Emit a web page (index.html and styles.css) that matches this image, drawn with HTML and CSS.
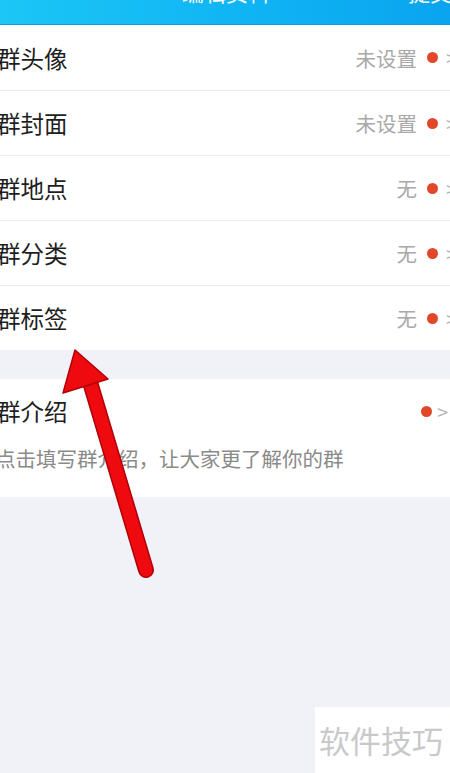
FILE: index.html
```html
<!DOCTYPE html>
<html lang="zh">
<head>
<meta charset="utf-8">
<link rel="stylesheet" href="styles.css">
</head>
<body>
<div class="page">
  <header class="topbar">
    <span class="back">&lsaquo;</span>
    <span class="title">编辑资料</span>
    <span class="submit">提交</span>
  </header>

  <section class="list">
    <div class="row"><span class="label">群头像</span><span class="value">未设置</span><span class="dot"></span><span class="chev">&gt;</span></div>
    <div class="row"><span class="label">群封面</span><span class="value">未设置</span><span class="dot"></span><span class="chev">&gt;</span></div>
    <div class="row"><span class="label">群地点</span><span class="value">无</span><span class="dot"></span><span class="chev">&gt;</span></div>
    <div class="row"><span class="label">群分类</span><span class="value">无</span><span class="dot"></span><span class="chev">&gt;</span></div>
    <div class="row"><span class="label">群标签</span><span class="value">无</span><span class="dot"></span><span class="chev">&gt;</span></div>
  </section>

  <section class="intro">
    <div class="intro-head"><span class="label">群介绍</span><span class="dot"></span><span class="chev">&gt;</span></div>
    <div class="intro-desc">点击填写群介绍，让大家更了解你的群</div>
  </section>

  <svg class="arrow" width="450" height="773" viewBox="0 0 450 773">
    <line x1="146" y1="570" x2="90" y2="382" stroke="#b00008" stroke-width="16" stroke-linecap="round"/>
    <line x1="146" y1="570" x2="90" y2="382" stroke="#ee0a0e" stroke-width="13" stroke-linecap="round"/>
    <polygon points="75,350 108,379 63,393" fill="#ee0a0e" stroke="#b00008" stroke-width="1.5" stroke-linejoin="round"/>
  </svg>

  <div class="watermark">软件技巧</div>
</div>
</body>
</html>
```

FILE: styles.css
```css
* { box-sizing: border-box; margin: 0; padding: 0; }
html, body { width: 450px; height: 773px; overflow: hidden; }
body {
  background: #f1f2f7;
  font-family: "Noto Sans CJK SC", "Noto Sans", sans-serif;
}
.page { position: relative; width: 450px; height: 773px; }

.topbar {
  height: 25px;
  background: linear-gradient(90deg, #1cc6f6 0%, #10b6f4 50%, #0aa4f0 100%);
  border-bottom: 1px solid #0e9fd6;
  position: relative;
  overflow: hidden;
  color: #fff;
}
.topbar span {
  position: absolute;
  line-height: 22px;
  font-size: 22px;
  top: -20px;
  white-space: nowrap;
}
.back { left: 2px; font-size: 30px; }
.title { left: 182px; }
.submit { left: 408px; }

.list { background: #fff; }
.row {
  height: 65px;
  display: flex;
  align-items: center;
  border-top: 1px solid #ececec;
}
.row:first-child { border-top: none; }
.label {
  flex: 1;
  font-size: 23.5px;
  color: #1e1e1e;
  margin-left: -3px;
}
.value {
  font-size: 20.5px;
  color: #a9a9a9;
  margin-right: 10px;
}
.dot {
  width: 11px;
  height: 11px;
  border-radius: 50%;
  background: #e2472a;
  flex: none;
}
.chev {
  font-size: 20px;
  color: #b5b5b5;
  margin-left: 8px;
  width: 4px;
  overflow: hidden;
  flex: none;
}

.intro {
  margin-top: 29px;
  background: #fff;
  height: 118px;
  padding-top: 15px;
}
.intro-head {
  display: flex;
  align-items: center;
  height: 34px;
}
.intro-head .chev { width: 13px; margin-left: 5px; }
.intro-desc {
  margin-top: 15px;
  margin-left: -5px;
  font-size: 20.5px;
  color: #8a8a8a;
  white-space: nowrap;
}

.arrow { position: absolute; left: 0; top: 0; pointer-events: none; }

.watermark {
  position: absolute;
  left: 315px;
  top: 707px;
  width: 135px;
  height: 66px;
  background: #fff;
  color: #c9c9c9;
  font-size: 31px;
  line-height: 66px;
  padding-left: 4px;
  white-space: nowrap;
  overflow: hidden;
}
```
